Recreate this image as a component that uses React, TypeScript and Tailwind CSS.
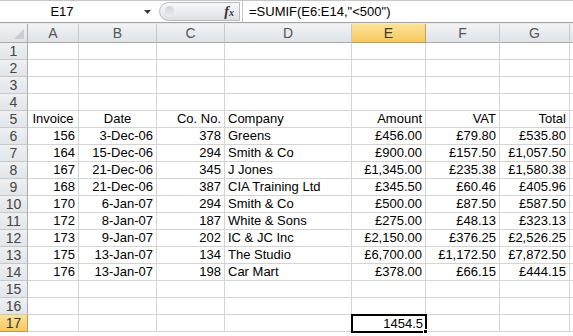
import React from 'react';

const cols = ['A', 'B', 'C', 'D', 'E', 'F', 'G'];

// each row: [A, B, C, D, E, F, G]
const rows: string[][] = [
  ['', '', '', '', '', '', ''],
  ['', '', '', '', '', '', ''],
  ['', '', '', '', '', '', ''],
  ['', '', '', '', '', '', ''],
  ['Invoice', 'Date', 'Co. No.', 'Company', 'Amount', 'VAT', 'Total'],
  ['156', '3-Dec-06', '378', 'Greens', '£456.00', '£79.80', '£535.80'],
  ['164', '15-Dec-06', '294', 'Smith & Co', '£900.00', '£157.50', '£1,057.50'],
  ['167', '21-Dec-06', '345', 'J Jones', '£1,345.00', '£235.38', '£1,580.38'],
  ['168', '21-Dec-06', '387', 'CIA Training Ltd', '£345.50', '£60.46', '£405.96'],
  ['170', '6-Jan-07', '294', 'Smith & Co', '£500.00', '£87.50', '£587.50'],
  ['172', '8-Jan-07', '187', 'White & Sons', '£275.00', '£48.13', '£323.13'],
  ['173', '9-Jan-07', '202', 'IC & JC Inc', '£2,150.00', '£376.25', '£2,526.25'],
  ['175', '13-Jan-07', '134', 'The Studio', '£6,700.00', '£1,172.50', '£7,872.50'],
  ['176', '13-Jan-07', '198', 'Car Mart', '£378.00', '£66.15', '£444.15'],
  ['', '', '', '', '', '', ''],
  ['', '', '', '', '', '', ''],
  ['', '', '', '', '1454.5', '', ''],
];

function align(r: number, c: number) {
  if (c === 3) return 'justify-start pl-[3px]';
  if (r === 4 && (c === 0 || c === 1)) return 'justify-center';
  return 'justify-end pr-[3px]';
}

export default function App() {
  return (
    <div className="w-[573px] h-[336px] overflow-hidden bg-white text-black" style={{ fontFamily: '"Liberation Sans", Arial, sans-serif' }}>
      {/* Formula bar */}
      <div className="flex h-[23px] border-t border-t-[#c6c6c6] border-b border-b-[#a3a3a3] bg-white">
        <div className="flex items-center w-[159px]">
          <span className="w-[124px] text-center text-[13px] pt-[1px]">E17</span>
          <svg width="8" height="5" viewBox="0 0 8 5" className="ml-[20px] mt-[1px]">
            <path d="M0 0 L7 0 L3.5 4 Z" fill="#3c3c3c" />
          </svg>
        </div>
        <div className="flex items-center">
          <div className="relative flex items-center justify-end w-[81px] h-[19px] rounded-l-[10px] border border-[#b8bcc2] bg-gradient-to-b from-[#f7f8f9] to-[#dde0e4] pr-[5px]">
            <div className="absolute left-[5px] top-[3px] w-[9px] h-[11px] rounded-full bg-gradient-to-b from-[#c9ccd1] to-[#eceef0] opacity-80" />
            <span className="text-[14px] italic font-bold text-[#333]" style={{ fontFamily: '"Liberation Serif", serif' }}>
              f<span className="text-[10px]">x</span>
            </span>
          </div>
        </div>
        <div className="flex items-center border-l border-l-[#c3c6cb] ml-[2px] pl-[6px] text-[13px] pt-[1px]">
          =SUMIF(E6:E14,"&lt;500")
        </div>
      </div>
      <div className="h-[1px] bg-[#e7e9ec]" />

      {/* Grid */}
      <div className="grid grid-cols-[28px_51px_78px_68px_127px_74px_74px_70px_20px] text-[13px]">
        {/* column header row */}
        <div className="relative h-[19px] border-r border-b border-[#a8adb3] bg-gradient-to-b from-[#f2f3f5] to-[#dfe2e6]">
          <div className="absolute right-[3px] bottom-[3px] w-0 h-0 border-l-[10px] border-l-transparent border-b-[10px] border-b-[#c9ccd0]" />
        </div>
        {cols.map((c) =>
          c === 'E' ? (
            <div key={c} className="h-[19px] flex items-center justify-center border-r border-b border-r-[#c8a048] border-b-[#c89b3a] bg-gradient-to-b from-[#fbe39a] to-[#f6c95b] text-[#3a3a3a] text-[14px]">
              {c}
            </div>
          ) : (
            <div key={c} className="h-[19px] flex items-center justify-center border-r border-b border-r-[#c5c9ce] border-b-[#a8adb3] bg-gradient-to-b from-[#f2f3f5] to-[#dfe2e6] text-[#555] text-[14px]">
              {c}
            </div>
          )
        )}
        <div className="h-[19px] border-b border-b-[#a8adb3] bg-gradient-to-b from-[#f2f3f5] to-[#dfe2e6]" />

        {/* body rows */}
        {rows.map((row, r) => (
          <React.Fragment key={r}>
            {r === 16 ? (
              <div className="h-[17px] flex items-center justify-center border-r border-b border-r-[#c89b3a] border-b-[#c89b3a] bg-gradient-to-b from-[#fbe39a] to-[#f6c95b] text-[#333] text-[14px]">
                {r + 1}
              </div>
            ) : (
              <div className="h-[17px] flex items-center justify-center border-r border-b border-r-[#a8adb3] border-b-[#c5c9ce] bg-gradient-to-b from-[#eef0f2] to-[#e2e5e9] text-[#444] text-[14px]">
                {r + 1}
              </div>
            )}
            {row.map((v, c) =>
              r === 16 && c === 4 ? (
                <div key={c} className="relative h-[17px] border-r border-b border-[#d4d4d4]">
                  <div className="absolute -left-[1px] -top-[1px] w-[76px] h-[19px] border-2 border-black flex items-center justify-end pr-[2px] bg-white">
                    {v}
                  </div>
                  <div className="absolute -right-[3px] -bottom-[3px] w-[5px] h-[5px] bg-black border border-white" />
                </div>
              ) : (
                <div key={c} className={`h-[17px] flex items-center whitespace-nowrap overflow-hidden border-r border-b border-[#d4d4d4] ${align(r, c)}`}>
                  {v}
                </div>
              )
            )}
            <div className="h-[17px] border-b border-[#d4d4d4]" />
          </React.Fragment>
        ))}
      </div>
    </div>
  );
}
